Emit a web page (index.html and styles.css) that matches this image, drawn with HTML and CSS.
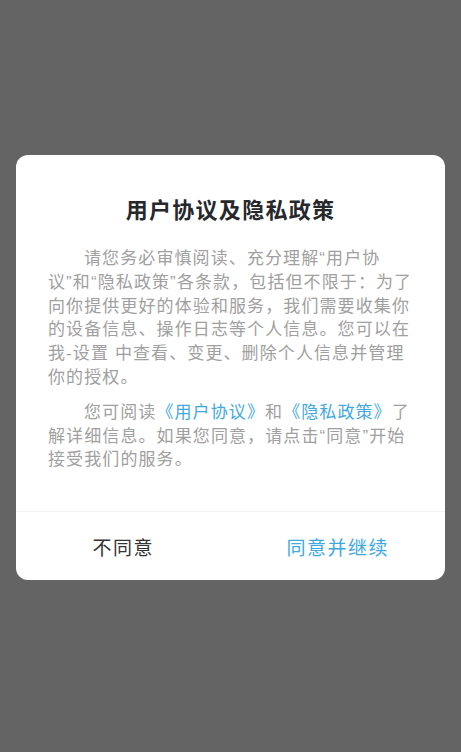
FILE: index.html
```html
<!DOCTYPE html>
<html lang="zh-CN">
<head>
    <meta charset="UTF-8">
    <meta name="viewport" content="width=device-width, initial-scale=1.0">
    <title>用户协议及隐私政策</title>
    <link rel="stylesheet" href="styles.css">
</head>
<body>
    <div class="overlay">
        <div class="dialog">
            <div class="dialog-body">
                <h2 class="dialog-title">用户协议及隐私政策</h2>
                <p class="dialog-text">请您务必审慎阅读、充分理解“用户协<br>议”和“隐私政策”各条款，包括但不限于：为了<br>向你提供更好的体验和服务，我们需要收集你<br>的设备信息、操作日志等个人信息。您可以在<br>我-设置 中查看、变更、删除个人信息并管理<br>你的授权。</p>
                <p class="dialog-text">您可阅读<a class="link" href="#">《用户协议》</a>和<a class="link" href="#">《隐私政策》</a>了<br>解详细信息。如果您同意，请点击“同意”开始<br>接受我们的服务。</p>
            </div>
            <div class="dialog-actions">
                <button class="action-btn disagree">不同意</button>
                <button class="action-btn agree">同意并继续</button>
            </div>
        </div>
    </div>
</body>
</html>
```

FILE: styles.css
```css
html, body {
    margin: 0;
    padding: 0;
    height: 100%;
}
body {
    font-family: "Liberation Sans", "Noto Sans CJK SC", sans-serif;
    background-color: #646464;
}
.overlay {
    padding: 155px 16px 0 16px;
}
.dialog {
    width: 429px;
    background-color: #fff;
    border-radius: 12px;
    overflow: hidden;
}
.dialog-body {
    padding: 41px 32px 39px 32px;
}
.dialog-title {
    margin: 0 0 21px 0;
    font-size: 22px;
    line-height: 30px;
    font-weight: bold;
    letter-spacing: 1.3px;
    text-align: center;
    color: #26282c;
}
.dialog-text {
    margin: 0;
    font-size: 17px;
    line-height: 23.8px;
    letter-spacing: 1.1px;
    text-indent: 36px;
    color: #a0a0a0;
    white-space: nowrap;
}
.dialog-text + .dialog-text {
    margin-top: 11px;
}
.link {
    color: #3fa9df;
    text-decoration: none;
}
.dialog-actions {
    display: flex;
    border-top: 1px solid #f3f3f3;
    height: 68px;
}
.action-btn {
    flex: 1;
    border: none;
    background: none;
    font-family: "Liberation Sans", "Noto Sans CJK SC", sans-serif;
    font-size: 19px;
    letter-spacing: 1.5px;
    cursor: pointer;
    padding: 0;
}
.disagree {
    color: #333;
}
.agree {
    color: #3fa9df;
}
```
